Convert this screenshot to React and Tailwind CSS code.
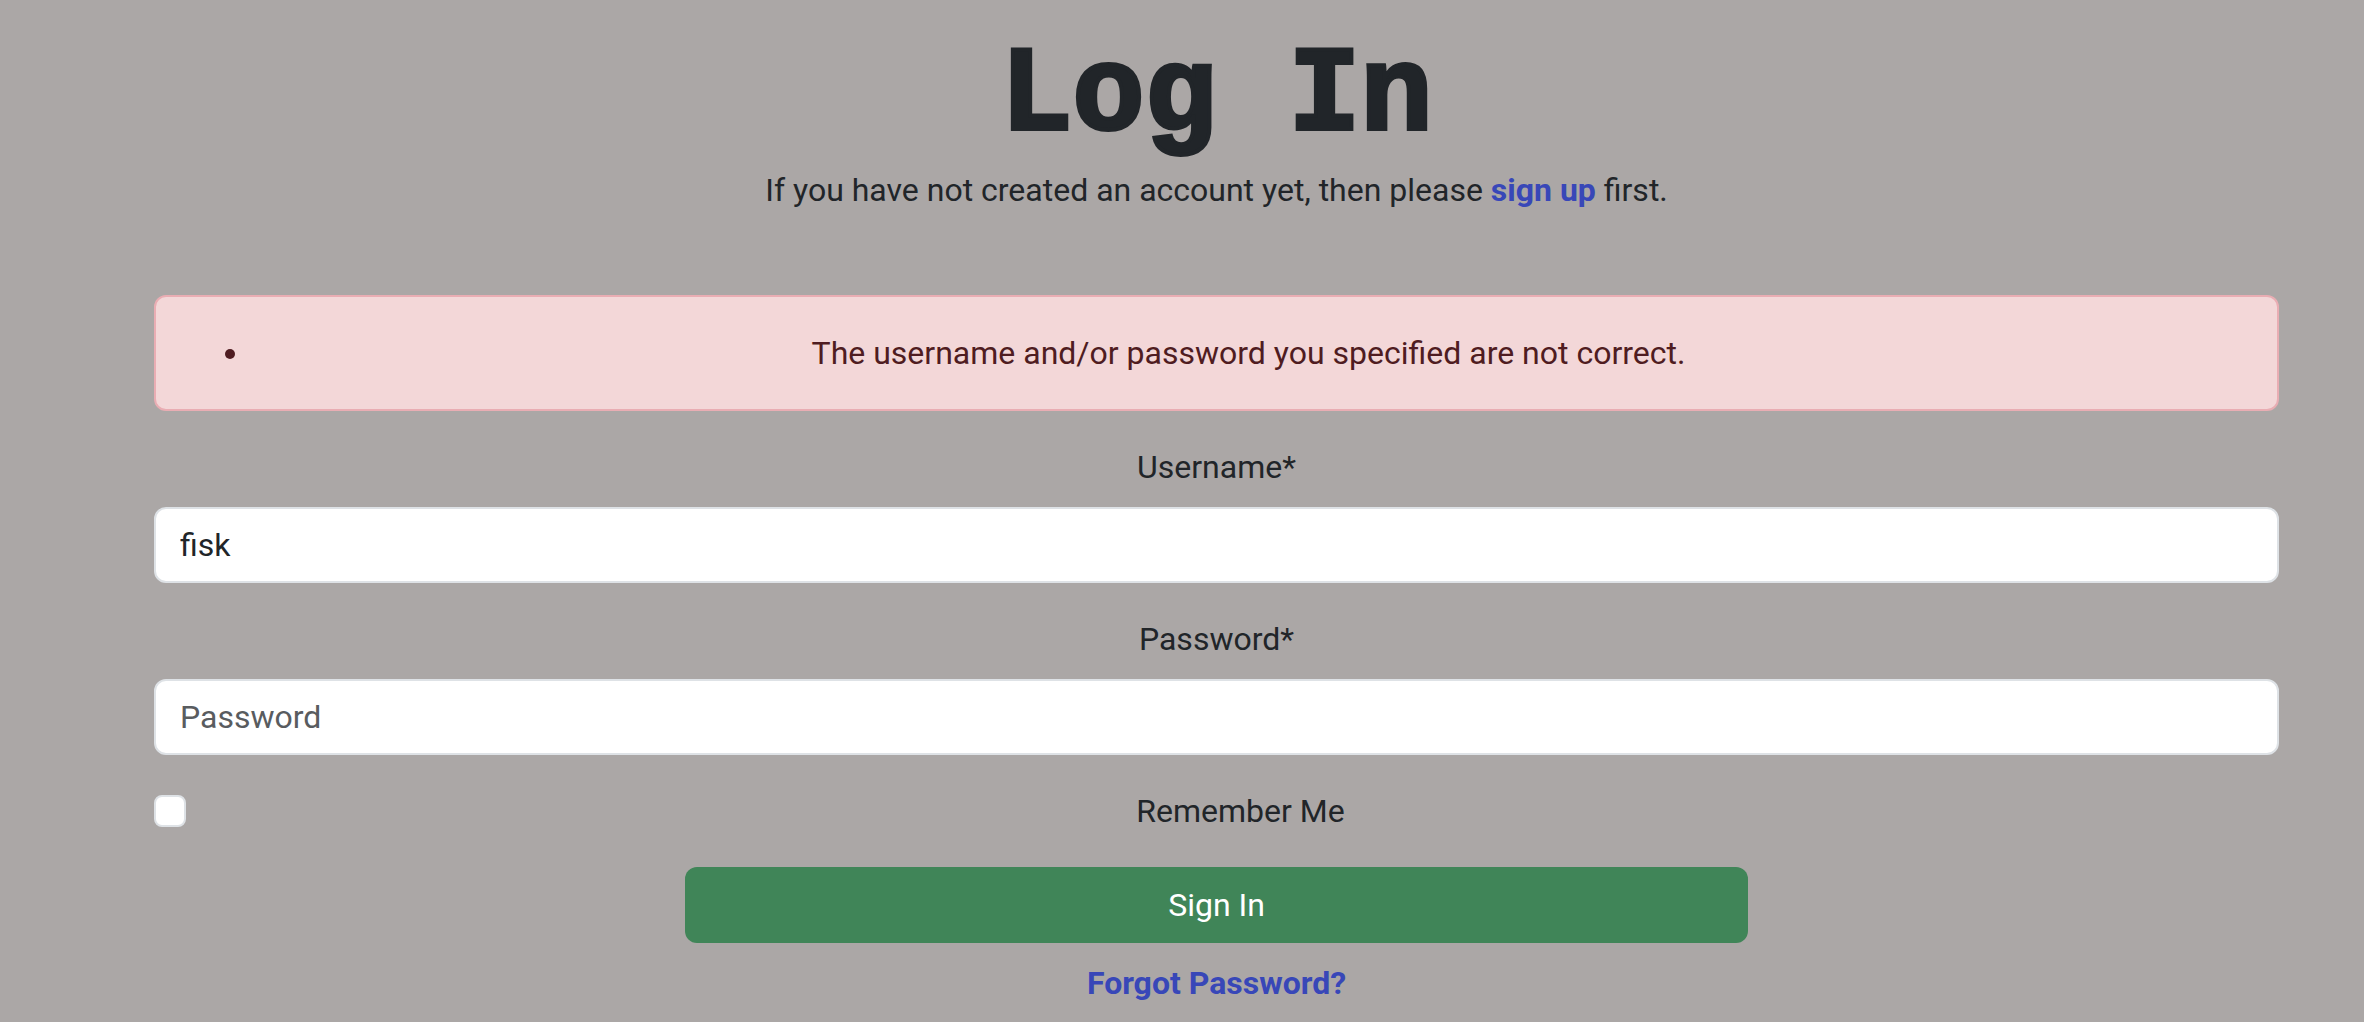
import { useState } from "react";

const inputClass =
  "block w-full rounded-[12px] border-2 border-[#dee2e6] bg-white px-6 py-3 text-[#212529] placeholder:text-[#595c5f] placeholder:opacity-100";

export default function App() {
  const [username, setUsername] = useState("fisk");
  const [password, setPassword] = useState("");

  return (
    <main className="min-h-screen bg-[#aba7a6] pt-10 pr-[85px] pb-4 pl-[154px] text-center font-['Roboto',sans-serif] text-[32px] leading-[48px] text-[#212529]">
      <h1 className="font-['Liberation_Mono',monospace] text-[120px] leading-[114px] font-bold [-webkit-text-stroke:4px_#212529]">
        Log In
      </h1>
      <p className="mt-3 mb-[81px]">
        If you have not created an account yet, then please{" "}
        <a href="#signup" className="font-bold text-[#3847b8]">
          sign up
        </a>{" "}
        first.
      </p>
      <form onSubmit={(e) => e.preventDefault()}>
        <div
          role="alert"
          className="mb-8 rounded-[12px] border-2 border-[#e9adb3] bg-[#f3d7d8] p-8 text-[#4f1c21]"
        >
          <ul className="list-disc pl-16">
            <li>The username and/or password you specified are not correct.</li>
          </ul>
        </div>
        <div className="mb-8">
          <label htmlFor="username" className="mb-4 block">
            Username*
          </label>
          <input
            id="username"
            type="text"
            value={username}
            onChange={(e) => setUsername(e.target.value)}
            className={inputClass}
          />
        </div>
        <div className="mb-8">
          <label htmlFor="password" className="mb-4 block">
            Password*
          </label>
          <input
            id="password"
            type="password"
            placeholder="Password"
            value={password}
            onChange={(e) => setPassword(e.target.value)}
            className={inputClass}
          />
        </div>
        <div className="mb-8 flex items-center gap-4">
          <input
            id="remember"
            type="checkbox"
            className="size-8 shrink-0 appearance-none rounded-lg border-2 border-[#dee2e6] bg-white checked:bg-[#3847b8]"
          />
          <label htmlFor="remember" className="flex-1">
            Remember Me
          </label>
        </div>
        <button
          type="submit"
          className="mx-auto mb-4 block w-1/2 rounded-[12px] bg-[#408558] px-6 py-[14px] text-white"
        >
          Sign In
        </button>
        <a href="#forgot" className="mx-auto block w-fit font-bold text-[#3847b8]">
          Forgot Password?
        </a>
      </form>
    </main>
  );
}
